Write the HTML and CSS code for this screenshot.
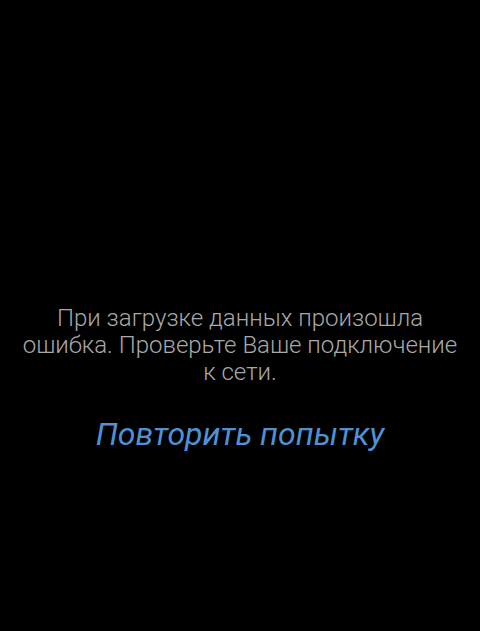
FILE: index.html
```html
<!DOCTYPE html>
<html lang="ru">
<head>
<meta charset="utf-8">
<link rel="stylesheet" href="styles.css">
</head>
<body>
<main class="screen">
  <div class="error">
    <p class="message">При загрузке данных произошла ошибка. Проверьте Ваше подключение к сети.</p>
    <button class="retry">Повторить попытку</button>
  </div>
</main>
</body>
</html>
```
FILE: styles.css
```css
html, body {
  margin: 0;
  padding: 0;
  background: #000;
  height: 100%;
}
.screen {
  height: 631px;
  display: flex;
  flex-direction: column;
  align-items: center;
  justify-content: flex-start;
  padding-top: 305px;
  box-sizing: border-box;
}
.error {
  display: flex;
  flex-direction: column;
  align-items: center;
}
.message {
  margin: 0;
  width: 440px;
  text-align: center;
  font-family: Roboto, "Noto Sans", sans-serif;
  font-weight: 300;
  font-size: 24px;
  line-height: 27px;
  color: #a9a9a9;
}
.retry {
  margin-top: 30px;
  background: none;
  border: 0;
  padding: 0;
  font-family: Roboto, "Noto Sans", sans-serif;
  font-style: italic;
  font-weight: 400;
  font-size: 32px;
  line-height: 36px;
  color: #4f92d4;
}
```
